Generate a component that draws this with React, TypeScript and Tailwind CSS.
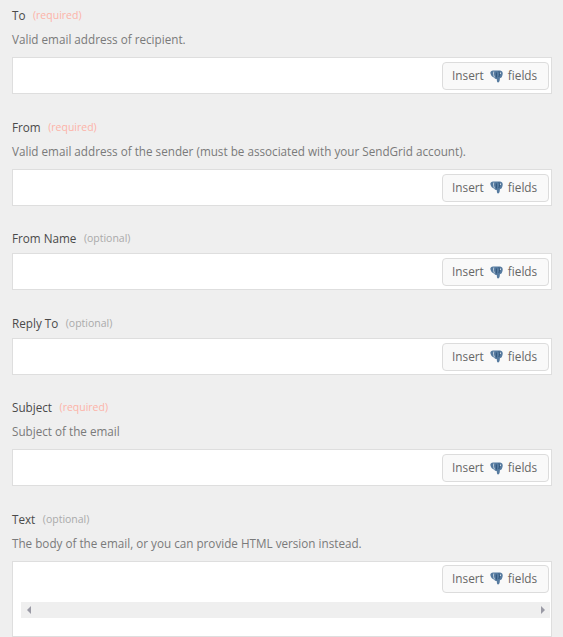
const fields = [
  { label: "To", tag: "required", help: "Valid email address of recipient." },
  { label: "From", tag: "required", help: "Valid email address of the sender (must be associated with your SendGrid account)." },
  { label: "From Name", tag: "optional" },
  { label: "Reply To", tag: "optional" },
  { label: "Subject", tag: "required", help: "Subject of the email" },
];

function Elephant() {
  return (
    <svg width="13" height="13" viewBox="0 0 13 13" className="ml-[6px] mr-[5px] shrink-0">
      <path
        d="M.5 2C1.300.5 3.500.3 6.500.6 9 .2 11.500.3 12.300 1.700c.8 1.500.4 3.500-.4 5-.5 1-1.300 1.400-2 1.500-.1 1.500-.2 2.900-.9 3.900-.7.700-1.700.5-2-.6l-.3-2.500c-1 .3-1.800-.2-2.300-1C3.900 7.400 2.200 7.200 1.300 5.600.5 4.200.1 3 .5 2z"
        fill="#557a9f"
      />
      <path d="M3.800 1.500c-.6 2-.3 4 .8 5.900" stroke="#d5dfe9" strokeWidth="0.8" fill="none" />
      <path d="M8.900 1.400c.9 1.600.8 3.700 0 5.500" stroke="#2f5378" strokeWidth="1" fill="none" />
      <path d="M6.400 2.500v5" stroke="#34597f" strokeWidth="1.100" fill="none" />
      <circle cx="10.400" cy="3.200" r="0.600" fill="#ffffff" />
    </svg>
  );
}

function InsertButton() {
  return (
    <button
      type="button"
      className="flex h-[28px] w-[107px] items-center rounded-[4px] border border-[#dcdcdc] bg-[#f9f9f9] pl-[9px] text-[11.8px] text-[#666666]"
    >
      Insert
      <Elephant />
      fields
    </button>
  );
}

function Field({ label, tag, help }: { label: string; tag: string; help?: string }) {
  return (
    <div className="mb-[22.5px]">
      <div className="flex h-[22px] items-center">
        <span className="text-[11.7px] text-[#4a4a4a]">{label}</span>
        <span className={`ml-[7.5px] text-[10.5px] ${tag === "required" ? "text-[#fdb3a8]" : "text-[#aaaaaa]"}`}>
          ({tag})
        </span>
      </div>
      {help && <p className="flex h-[27px] items-center pb-[1px] text-[11.7px] text-[#7a7a7a]">{help}</p>}
      <div className="mt-[3px] flex h-[37px] justify-end border border-[#dedede] bg-white pr-[2px] pt-[4px]">
        <InsertButton />
      </div>
    </div>
  );
}

export default function App() {
  return (
    <div className="h-[637px] overflow-hidden bg-[#efefef] pl-[12px] pr-[11px] pt-[5px] font-['Open_Sans',sans-serif]">
      {fields.map((f) => (
        <Field key={f.label} {...f} />
      ))}
      <div>
        <div className="flex h-[22px] items-center">
          <span className="text-[11.7px] text-[#4a4a4a]">Text</span>
          <span className="ml-[7.5px] text-[10.5px] text-[#aaaaaa]">(optional)</span>
        </div>
        <p className="flex h-[27px] items-center pb-[1px] text-[11.7px] text-[#7a7a7a]">
          The body of the email, or you can provide HTML version instead.
        </p>
        <div className="mt-[3px] h-[76px] border border-[#dedede] bg-white pl-[8px] pr-[2px] pt-[3px]">
          <div className="flex justify-end">
            <InsertButton />
          </div>
          <div className="-mr-[1px] mt-[9px] flex h-[16px] items-center justify-between bg-[#efefef] pl-[6px] pr-[5px]">
            <span className="h-0 w-0 border-y-[4px] border-r-[4px] border-y-transparent border-r-[#9a9aa5]" />
            <span className="h-0 w-0 border-y-[4px] border-l-[4px] border-y-transparent border-l-[#9a9aa5]" />
          </div>
        </div>
      </div>
    </div>
  );
}
